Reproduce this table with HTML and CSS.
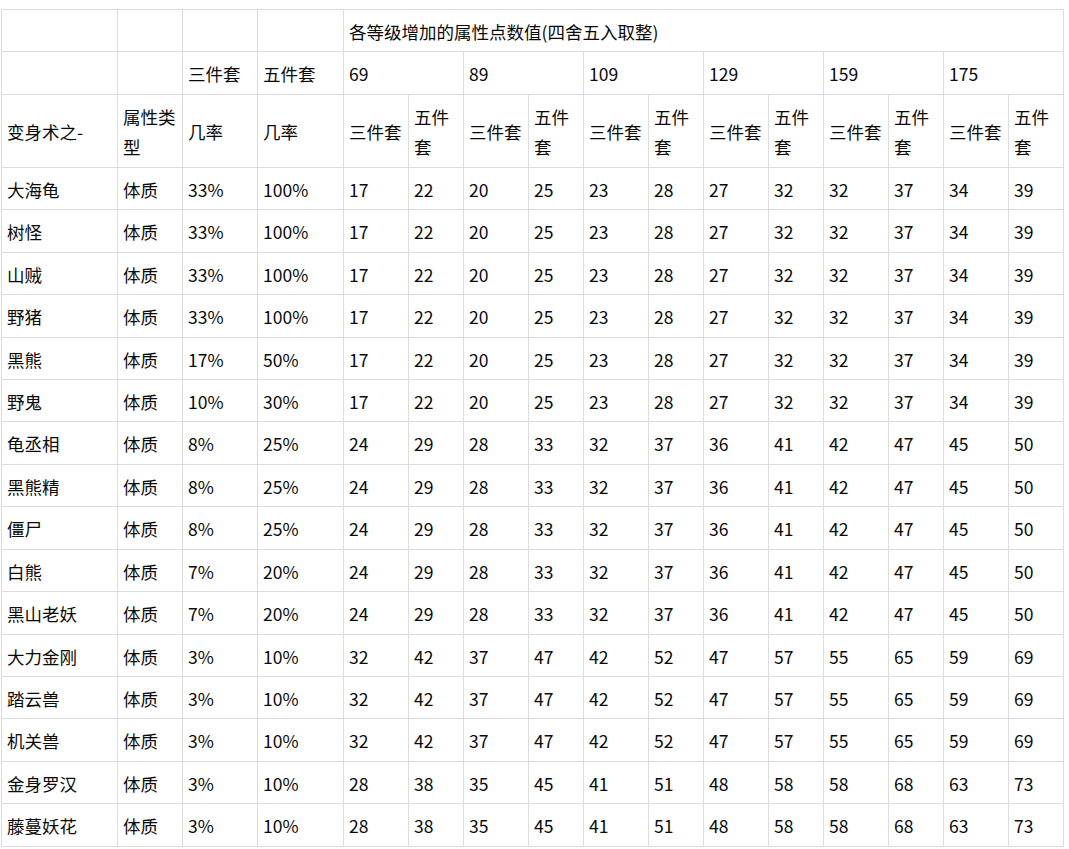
FILE: index.html
```html
<!DOCTYPE html>
<html lang="zh-CN">
<head>
<meta charset="utf-8">
<title>变身术属性表</title>
<link rel="stylesheet" href="styles.css">
</head>
<body>
<table class="grid">
<colgroup>
<col class="c-name"><col class="c-type"><col class="c-p3"><col class="c-p5">
<col class="c-a"><col class="c-b"><col class="c-a"><col class="c-b"><col class="c-a"><col class="c-b">
<col class="c-a"><col class="c-b"><col class="c-a"><col class="c-b"><col class="c-a"><col class="c-b">
</colgroup>
<tbody>
<tr><td></td><td></td><td></td><td></td><td colspan="12">各等级增加的属性点数值(四舍五入取整)</td></tr>
<tr><td></td><td></td><td>三件套</td><td>五件套</td><td colspan="2">69</td><td colspan="2">89</td><td colspan="2">109</td><td colspan="2">129</td><td colspan="2">159</td><td colspan="2">175</td></tr>
<tr><td>变身术之-</td><td>属性类型</td><td>几率</td><td>几率</td><td>三件套</td><td>五件套</td><td>三件套</td><td>五件套</td><td>三件套</td><td>五件套</td><td>三件套</td><td>五件套</td><td>三件套</td><td>五件套</td><td>三件套</td><td>五件套</td></tr>
<tr><td>大海龟</td><td>体质</td><td>33%</td><td>100%</td><td>17</td><td>22</td><td>20</td><td>25</td><td>23</td><td>28</td><td>27</td><td>32</td><td>32</td><td>37</td><td>34</td><td>39</td></tr>
<tr><td>树怪</td><td>体质</td><td>33%</td><td>100%</td><td>17</td><td>22</td><td>20</td><td>25</td><td>23</td><td>28</td><td>27</td><td>32</td><td>32</td><td>37</td><td>34</td><td>39</td></tr>
<tr><td>山贼</td><td>体质</td><td>33%</td><td>100%</td><td>17</td><td>22</td><td>20</td><td>25</td><td>23</td><td>28</td><td>27</td><td>32</td><td>32</td><td>37</td><td>34</td><td>39</td></tr>
<tr><td>野猪</td><td>体质</td><td>33%</td><td>100%</td><td>17</td><td>22</td><td>20</td><td>25</td><td>23</td><td>28</td><td>27</td><td>32</td><td>32</td><td>37</td><td>34</td><td>39</td></tr>
<tr><td>黑熊</td><td>体质</td><td>17%</td><td>50%</td><td>17</td><td>22</td><td>20</td><td>25</td><td>23</td><td>28</td><td>27</td><td>32</td><td>32</td><td>37</td><td>34</td><td>39</td></tr>
<tr><td>野鬼</td><td>体质</td><td>10%</td><td>30%</td><td>17</td><td>22</td><td>20</td><td>25</td><td>23</td><td>28</td><td>27</td><td>32</td><td>32</td><td>37</td><td>34</td><td>39</td></tr>
<tr><td>龟丞相</td><td>体质</td><td>8%</td><td>25%</td><td>24</td><td>29</td><td>28</td><td>33</td><td>32</td><td>37</td><td>36</td><td>41</td><td>42</td><td>47</td><td>45</td><td>50</td></tr>
<tr><td>黑熊精</td><td>体质</td><td>8%</td><td>25%</td><td>24</td><td>29</td><td>28</td><td>33</td><td>32</td><td>37</td><td>36</td><td>41</td><td>42</td><td>47</td><td>45</td><td>50</td></tr>
<tr><td>僵尸</td><td>体质</td><td>8%</td><td>25%</td><td>24</td><td>29</td><td>28</td><td>33</td><td>32</td><td>37</td><td>36</td><td>41</td><td>42</td><td>47</td><td>45</td><td>50</td></tr>
<tr><td>白熊</td><td>体质</td><td>7%</td><td>20%</td><td>24</td><td>29</td><td>28</td><td>33</td><td>32</td><td>37</td><td>36</td><td>41</td><td>42</td><td>47</td><td>45</td><td>50</td></tr>
<tr><td>黑山老妖</td><td>体质</td><td>7%</td><td>20%</td><td>24</td><td>29</td><td>28</td><td>33</td><td>32</td><td>37</td><td>36</td><td>41</td><td>42</td><td>47</td><td>45</td><td>50</td></tr>
<tr><td>大力金刚</td><td>体质</td><td>3%</td><td>10%</td><td>32</td><td>42</td><td>37</td><td>47</td><td>42</td><td>52</td><td>47</td><td>57</td><td>55</td><td>65</td><td>59</td><td>69</td></tr>
<tr><td>踏云兽</td><td>体质</td><td>3%</td><td>10%</td><td>32</td><td>42</td><td>37</td><td>47</td><td>42</td><td>52</td><td>47</td><td>57</td><td>55</td><td>65</td><td>59</td><td>69</td></tr>
<tr><td>机关兽</td><td>体质</td><td>3%</td><td>10%</td><td>32</td><td>42</td><td>37</td><td>47</td><td>42</td><td>52</td><td>47</td><td>57</td><td>55</td><td>65</td><td>59</td><td>69</td></tr>
<tr><td>金身罗汉</td><td>体质</td><td>3%</td><td>10%</td><td>28</td><td>38</td><td>35</td><td>45</td><td>41</td><td>51</td><td>48</td><td>58</td><td>58</td><td>68</td><td>63</td><td>73</td></tr>
<tr><td>藤蔓妖花</td><td>体质</td><td>3%</td><td>10%</td><td>28</td><td>38</td><td>35</td><td>45</td><td>41</td><td>51</td><td>48</td><td>58</td><td>58</td><td>68</td><td>63</td><td>73</td></tr>
</tbody>
</table>
</body>
</html>
```

FILE: styles.css
```css
html, body {
  margin: 0;
  padding: 0;
  background: #ffffff;
}

body {
  font-family: "Noto Sans CJK SC", "Noto Sans", sans-serif;
  font-size: 17.5px;
  color: #0a0a0a;
}

.grid {
  margin: 9px 0 0 1px;
  width: 1063px;
  table-layout: fixed;
  border-collapse: collapse;
}

.grid td {
  border: 1px solid #dcdcdc;
  padding: 7px 3px 4px 5px;
  line-height: 30.44px;
  vertical-align: middle;
  text-align: left;
  word-break: break-all;
}

.c-name { width: 116px; }
.c-type { width: 65px; }
.c-p3 { width: 75px; }
.c-p5 { width: 86px; }
.c-a { width: 65px; }
.c-b { width: 55px; }
```
